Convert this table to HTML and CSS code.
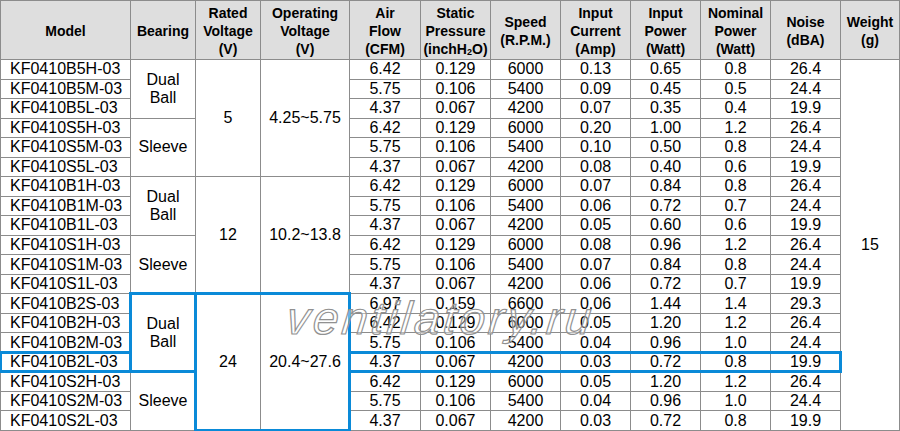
FILE: index.html
```html
<!DOCTYPE html>
<html lang="en">
<head>
<meta charset="utf-8">
<title>KF0410 series specifications</title>
<link rel="stylesheet" href="styles.css">
</head>
<body>
<div class="sheet">
  <div class="spec">
    <div class="h"><span>Model</span></div>
    <div class="h"><span>Bearing</span></div>
    <div class="h"><span>Rated<br>Voltage<br>(V)</span></div>
    <div class="h"><span>Operating<br>Voltage<br>(V)</span></div>
    <div class="h"><span>Air<br>Flow<br>(CFM)</span></div>
    <div class="h"><span>Static<br>Pressure<br>(inchH<sub>2</sub>O)</span></div>
    <div class="h"><span>Speed<br>(R.P.M.)</span></div>
    <div class="h"><span>Input<br>Current<br>(Amp)</span></div>
    <div class="h"><span>Input<br>Power<br>(Watt)</span></div>
    <div class="h"><span>Nominal<br>Power<br>(Watt)</span></div>
    <div class="h"><span>Noise<br>(dBA)</span></div>
    <div class="h"><span>Weight<br>(g)</span></div>

    <div class="c m">KF0410B5H-03</div><div class="c s3"><span>Dual<br>Ball</span></div><div class="c s6">5</div><div class="c s6">4.25~5.75</div><div class="c">6.42</div><div class="c">0.129</div><div class="c">6000</div><div class="c">0.13</div><div class="c">0.65</div><div class="c">0.8</div><div class="c">26.4</div><div class="c s19">15</div>
    <div class="c m">KF0410B5M-03</div><div class="c">5.75</div><div class="c">0.106</div><div class="c">5400</div><div class="c">0.09</div><div class="c">0.45</div><div class="c">0.5</div><div class="c">24.4</div>
    <div class="c m">KF0410B5L-03</div><div class="c">4.37</div><div class="c">0.067</div><div class="c">4200</div><div class="c">0.07</div><div class="c">0.35</div><div class="c">0.4</div><div class="c">19.9</div>
    <div class="c m">KF0410S5H-03</div><div class="c s3">Sleeve</div><div class="c">6.42</div><div class="c">0.129</div><div class="c">6000</div><div class="c">0.20</div><div class="c">1.00</div><div class="c">1.2</div><div class="c">26.4</div>
    <div class="c m">KF0410S5M-03</div><div class="c">5.75</div><div class="c">0.106</div><div class="c">5400</div><div class="c">0.10</div><div class="c">0.50</div><div class="c">0.8</div><div class="c">24.4</div>
    <div class="c m">KF0410S5L-03</div><div class="c">4.37</div><div class="c">0.067</div><div class="c">4200</div><div class="c">0.08</div><div class="c">0.40</div><div class="c">0.6</div><div class="c">19.9</div>

    <div class="c m">KF0410B1H-03</div><div class="c s3"><span>Dual<br>Ball</span></div><div class="c s6">12</div><div class="c s6">10.2~13.8</div><div class="c">6.42</div><div class="c">0.129</div><div class="c">6000</div><div class="c">0.07</div><div class="c">0.84</div><div class="c">0.8</div><div class="c">26.4</div>
    <div class="c m">KF0410B1M-03</div><div class="c">5.75</div><div class="c">0.106</div><div class="c">5400</div><div class="c">0.06</div><div class="c">0.72</div><div class="c">0.7</div><div class="c">24.4</div>
    <div class="c m">KF0410B1L-03</div><div class="c">4.37</div><div class="c">0.067</div><div class="c">4200</div><div class="c">0.05</div><div class="c">0.60</div><div class="c">0.6</div><div class="c">19.9</div>
    <div class="c m">KF0410S1H-03</div><div class="c s3">Sleeve</div><div class="c">6.42</div><div class="c">0.129</div><div class="c">6000</div><div class="c">0.08</div><div class="c">0.96</div><div class="c">1.2</div><div class="c">26.4</div>
    <div class="c m">KF0410S1M-03</div><div class="c">5.75</div><div class="c">0.106</div><div class="c">5400</div><div class="c">0.07</div><div class="c">0.84</div><div class="c">0.8</div><div class="c">24.4</div>
    <div class="c m">KF0410S1L-03</div><div class="c">4.37</div><div class="c">0.067</div><div class="c">4200</div><div class="c">0.06</div><div class="c">0.72</div><div class="c">0.7</div><div class="c">19.9</div>

    <div class="c m">KF0410B2S-03</div><div class="c s4"><span>Dual<br>Ball</span></div><div class="c s7">24</div><div class="c s7">20.4~27.6</div><div class="c">6.97</div><div class="c">0.159</div><div class="c">6600</div><div class="c">0.06</div><div class="c">1.44</div><div class="c">1.4</div><div class="c">29.3</div>
    <div class="c m">KF0410B2H-03</div><div class="c">6.42</div><div class="c">0.129</div><div class="c">6000</div><div class="c">0.05</div><div class="c">1.20</div><div class="c">1.2</div><div class="c">26.4</div>
    <div class="c m">KF0410B2M-03</div><div class="c">5.75</div><div class="c">0.106</div><div class="c">5400</div><div class="c">0.04</div><div class="c">0.96</div><div class="c">1.0</div><div class="c">24.4</div>
    <div class="c m">KF0410B2L-03</div><div class="c">4.37</div><div class="c">0.067</div><div class="c">4200</div><div class="c">0.03</div><div class="c">0.72</div><div class="c">0.8</div><div class="c">19.9</div>
    <div class="c m">KF0410S2H-03</div><div class="c s3">Sleeve</div><div class="c">6.42</div><div class="c">0.129</div><div class="c">6000</div><div class="c">0.05</div><div class="c">1.20</div><div class="c">1.2</div><div class="c">26.4</div>
    <div class="c m">KF0410S2M-03</div><div class="c">5.75</div><div class="c">0.106</div><div class="c">5400</div><div class="c">0.04</div><div class="c">0.96</div><div class="c">1.0</div><div class="c">24.4</div>
    <div class="c m">KF0410S2L-03</div><div class="c">4.37</div><div class="c">0.067</div><div class="c">4200</div><div class="c">0.03</div><div class="c">0.72</div><div class="c">0.8</div><div class="c">19.9</div>
  </div>

  <div class="marks" aria-hidden="true">
    <div class="box box-bearing"></div>
    <div class="box box-voltage"></div>
    <div class="box box-model"></div>
    <div class="box box-data"></div>
    <div class="watermark">ventilatory.ru</div>
  </div>
</div>
</body>
</html>
```

FILE: styles.css
```css
html, body {
  margin: 0;
  padding: 0;
  background: #ffffff;
}

body {
  font-family: "Liberation Sans", Arial, sans-serif;
  color: #000;
}

.sheet {
  position: relative;
  width: 900px;
  height: 431px;
}

.spec,
.marks {
  display: grid;
  grid-template-columns: 129px 64px 64px 88px 70px 69px 69px 69px 69px 69px 69px 58px;
  grid-template-rows: 58px repeat(19, 1fr);
  gap: 1px;
  padding: 1px;
  width: 900px;
  height: 431px;
  box-sizing: border-box;
}

.spec {
  background: #8c8c8c;
}

.h {
  background: #dedede;
  font-weight: bold;
  font-size: 14px;
  line-height: 18px;
  display: flex;
  align-items: center;
  justify-content: center;
  text-align: center;
  padding-top: 1px;
}

.h sub {
  font-size: 9px;
  vertical-align: -1px;
  line-height: 0;
}

.c {
  background: #fff;
  font-size: 16px;
  line-height: 18px;
  display: flex;
  align-items: center;
  justify-content: center;
  text-align: center;
}

.c.m {
  justify-content: flex-start;
  padding-left: 9px;
}

.s3 { grid-row: span 3; }
.s4 { grid-row: span 4; }
.s6 { grid-row: span 6; }
.s7 { grid-row: span 7; }
.s19 { grid-row: span 19; }

/* overlay layer: highlight frames + watermark */
.marks {
  position: absolute;
  top: 0;
  left: 0;
  pointer-events: none;
}

.box {
  border: 3px solid #0a8ad8;
  margin: -2px;
}

.box-bearing {
  grid-column: 2 / 3;
  grid-row: 14 / 18;
}

.box-voltage {
  grid-column: 3 / 5;
  grid-row: 14 / 21;
}

.box-model {
  grid-column: 1 / 2;
  grid-row: 17 / 18;
}

.box-data {
  grid-column: 5 / 12;
  grid-row: 17 / 18;
}

.watermark {
  grid-column: 4 / 13;
  grid-row: 14 / 17;
  align-self: center;
  justify-self: start;
  margin-left: 26px;
  margin-top: -10px;
  font-family: "Liberation Sans", Arial, sans-serif;
  font-style: italic;
  font-size: 46px;
  letter-spacing: 3.4px;
  line-height: 1;
  white-space: nowrap;
  color: rgba(255, 255, 255, 0.4);
  -webkit-text-stroke: 1.2px #919191;
  transform: skewX(-6deg);
}
```
